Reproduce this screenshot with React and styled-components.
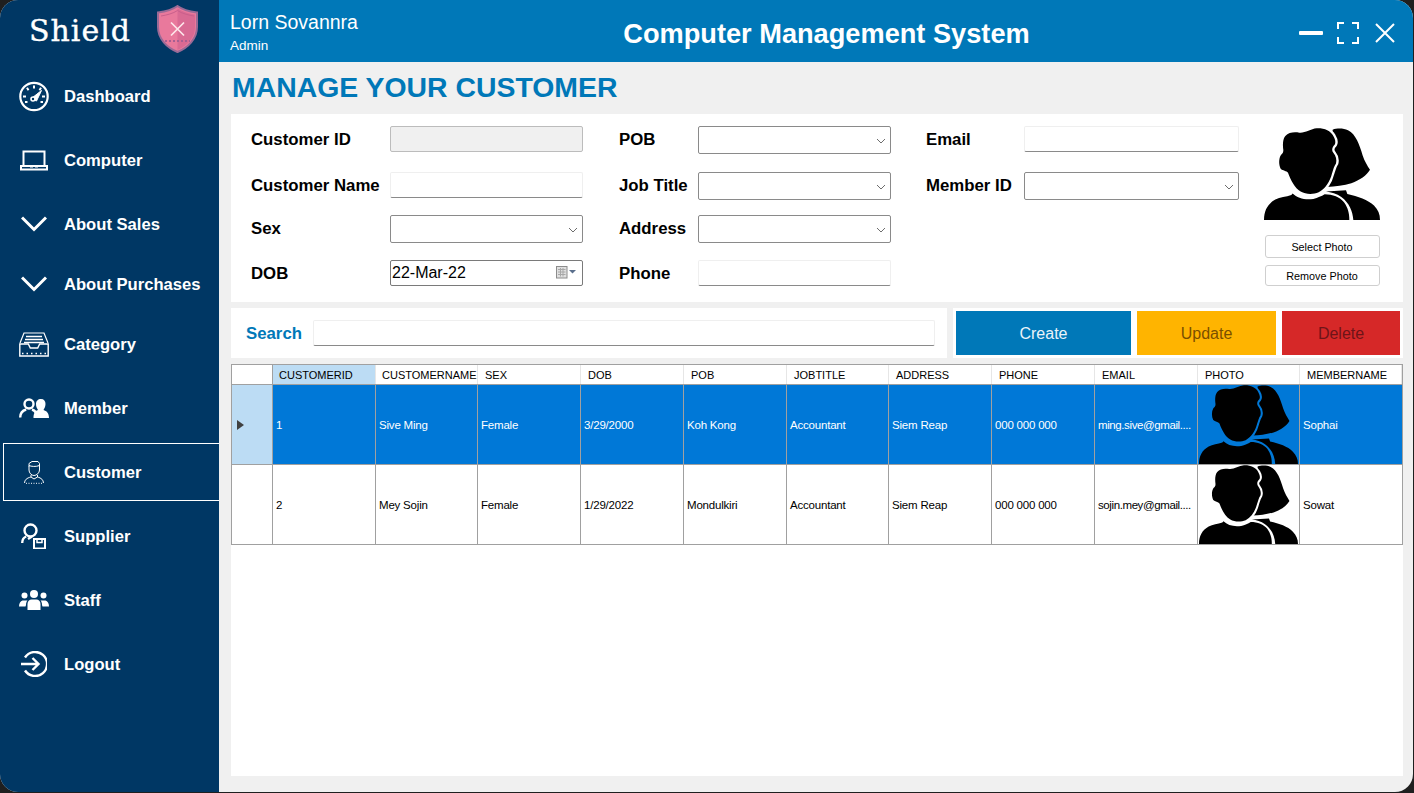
import styled, { createGlobalStyle } from "styled-components";

const GlobalStyle = createGlobalStyle`
  html, body {
    margin: 0;
    padding: 0;
    background: #1f1f1f;
  }
  * {
    box-sizing: border-box;
  }
`;

const COLUMNS = "41px 103px 102px 103px 103px 103px 102px 103px 103px 103px 102px 102px";

const Window = styled.div`
  width: 1413px;
  height: 792px;
  display: flex;
  overflow: hidden;
  border-radius: 18px;
  background: #f0f0f0;
  font-family: "Liberation Sans", Arial, sans-serif;
`;

const Sidebar = styled.aside`
  width: 219px;
  flex-shrink: 0;
  background: #003764;
  color: #fff;
`;

const Brand = styled.div`
  height: 64px;
  display: flex;
  padding: 5px 0 0 29px;
`;

const BrandName = styled.div`
  font-family: "DejaVu Serif", serif;
  font-size: 30px;
  letter-spacing: 1px;
  line-height: 52px;
  width: 128px;
  -webkit-text-stroke: 0.35px #fff;
`;

const Nav = styled.nav`
  display: flex;
  flex-direction: column;
`;

const NavItem = styled.div`
  height: ${(p) => (p.$compact ? "50px" : "58px")};
  margin: 3px 0 3px 3px;
  display: flex;
  align-items: center;
  border: 1px solid ${(p) => (p.$active ? "#fff" : "transparent")};
  border-right: 0;
  font-size: 16.6px;
  font-weight: 700;
`;

const NavLabel = styled.span`
  padding-top: 2px;
`;

const NavIconSlot = styled.div`
  width: 60px;
  flex-shrink: 0;
  display: flex;
  justify-content: center;
  padding-right: 1px;
`;

const Main = styled.main`
  flex: 1;
  min-width: 0;
  display: flex;
  flex-direction: column;
`;

const TopBar = styled.header`
  height: 62px;
  flex-shrink: 0;
  display: flex;
  align-items: center;
  padding-left: 11px;
  padding-right: 18px;
  background: #0078b8;
  color: #fff;
`;

const UserBlock = styled.div`
  width: 124px;
  flex-shrink: 0;
  padding-top: 2px;
`;

const UserName = styled.div`
  font-size: 19.5px;
  line-height: 22px;
  white-space: nowrap;
`;

const UserRole = styled.div`
  font-size: 13.5px;
  line-height: 16px;
  margin-top: 5px;
`;

const AppTitle = styled.h1`
  flex: 1;
  margin: 0;
  padding-top: 6px;
  text-align: center;
  font-size: 27.2px;
  font-weight: 700;
`;

const WindowControls = styled.div`
  display: flex;
  align-items: center;
  gap: 14px;
  padding-top: 4px;
`;

const Content = styled.div`
  flex: 1;
  display: flex;
  flex-direction: column;
  gap: 6px;
  padding: 0 10px 16px 12px;
`;

const PageTitle = styled.h2`
  height: 46px;
  margin: 0;
  padding-left: 1px;
  font-size: 28.4px;
  font-weight: 700;
  line-height: 50px;
  color: #0078b8;
  white-space: nowrap;
`;

const FormPanel = styled.section`
  height: 188px;
  display: flex;
  padding: 12px 23px 0 20px;
  background: #fff;
`;

const FieldColumn = styled.div`
  width: ${(p) => p.$width}px;
  margin-right: ${(p) => p.$gap}px;
  flex-shrink: 0;
  display: grid;
  grid-template-columns: ${(p) => p.$labelWidth}px 1fr;
  grid-template-rows: 46px 43px 45px 28px;
  align-items: start;
`;

const FieldLabel = styled.label`
  font-size: 16.8px;
  font-weight: 700;
  line-height: 28px;
  color: #000;
  white-space: nowrap;
`;

const TextBox = styled.div`
  height: 26px;
  background: ${(p) => (p.$disabled ? "#f0f0f0" : "#fff")};
  border: 1px solid ${(p) => (p.$disabled ? "#bcbcbc" : "#efefef")};
  border-bottom-color: ${(p) => (p.$disabled ? "#bcbcbc" : "#8a8a8a")};
  border-radius: 2px;
`;

const DropDown = styled.div`
  height: 28px;
  display: flex;
  align-items: center;
  justify-content: flex-end;
  padding: 2px 4px 0 0;
  background: #fff;
  border: 1px solid #8a8a8a;
  border-radius: 2px;
`;

const DatePicker = styled.div`
  height: 26px;
  display: flex;
  align-items: center;
  justify-content: space-between;
  padding: 0 5px 1px 1px;
  background: #fff;
  border: 1px solid #7a7a7a;
  border-radius: 2px;
  font-size: 16px;
  color: #000;
`;

const PhotoColumn = styled.div`
  width: 116px;
  margin-top: 2px;
  display: flex;
  flex-direction: column;
  align-items: center;
`;

const PhotoButton = styled.div`
  width: 115px;
  height: ${(p) => p.$height}px;
  margin-top: ${(p) => p.$top}px;
  display: flex;
  align-items: center;
  justify-content: center;
  font-size: 10.8px;
  color: #000;
  background: #fff;
  border: 1px solid #cfcfcf;
  border-radius: 3px;
`;

const ActionRow = styled.div`
  height: 50px;
  display: flex;
  gap: 6px;
`;

const SearchPanel = styled.div`
  width: 716px;
  display: flex;
  align-items: center;
  padding: 0 12px 0 15px;
  background: #fff;
`;

const SearchLabel = styled.label`
  width: 67px;
  padding-top: 1px;
  font-size: 16.8px;
  font-weight: 700;
  color: #0078b8;
`;

const SearchBox = styled(TextBox)`
  flex: 1;
`;

const ActionButtons = styled.div`
  flex: 1;
  display: flex;
  gap: 6px;
  padding: 3px;
  background: #fff;
`;

const ActionButton = styled.div`
  width: ${(p) => p.$width}px;
  height: 44px;
  display: flex;
  align-items: center;
  justify-content: center;
  padding-top: 1px;
  font-size: 16px;
  background: ${(p) => p.$bg};
  color: ${(p) => p.$color};
`;

const GridPanel = styled.section`
  flex: 1;
  background: #fff;
`;

const DataGrid = styled.div`
  width: 1172px;
  border: 1px solid #a0a0a0;
`;

const GridRow = styled.div`
  display: grid;
  grid-template-columns: ${COLUMNS};
  height: ${(p) => (p.$header ? "20px" : p.$last ? "79px" : "80px")};
  background: ${(p) => (p.$selected ? "#0078d7" : "#fff")};
  color: ${(p) => (p.$selected ? "#fff" : "#000")};
  border-bottom: ${(p) => (p.$last ? "0" : "1px solid #a0a0a0")};
`;

const HeaderCell = styled.div`
  display: flex;
  align-items: center;
  padding-left: 7px;
  font-size: 11px;
  color: #000;
  white-space: nowrap;
  overflow: hidden;
  background: ${(p) => (p.$selected ? "#bcdcf4" : "#fff")};
  border-right: 1px solid ${(p) => (p.$corner ? "#a0a0a0" : "#e6e6e6")};
  &:nth-child(-n + 3) {
    padding-left: 6px;
  }
`;

const Cell = styled.div`
  display: flex;
  align-items: center;
  padding-left: 3px;
  font-size: 11.5px;
  letter-spacing: ${(p) => (p.$tight ? "-0.4px" : "-0.2px")};
  white-space: nowrap;
  overflow: hidden;
  border-right: 1px solid #a0a0a0;
  &:last-child {
    border-right: 0;
  }
`;

const PhotoCell = styled(Cell)`
  padding: 0 0 0 1px;
`;

const RowHeader = styled.div`
  display: flex;
  align-items: center;
  padding-left: 5px;
  color: #404040;
  background: ${(p) => (p.$selected ? "#bcdcf4" : "#fff")};
  border-right: 1px solid #a0a0a0;
`;

const Chevron = () => (
  <svg width="10" height="6" viewBox="0 0 10 6" fill="none">
    <path d="M1 1l4 4 4-4" stroke="#6d6d6d" strokeWidth="1" />
  </svg>
);

const CalendarIcon = () => (
  <svg width="21" height="13" viewBox="0 0 21 13">
    <rect x="0.500" y="0.500" width="10.500" height="11.500" fill="#e0e0e0" stroke="#8c8c8c" />
    <path d="M2 3.500h7.500M2 6h7.500M2 8.500h7.500M4.500 2v8.500M7 2v8.500" stroke="#a8a8a8" strokeWidth="1" />
    <path d="M13 4h7l-3.500 3.500z" fill="#5a6f8c" />
  </svg>
);

const PeopleIcon = ({ width, height, gap = "#fff" }) => (
  <svg width={width} height={height} viewBox="0 0 348 275" preserveAspectRatio="none">
    <path d="M206 5C218 1 238 0 252 7C276 19 286 50 296 82C302 100 310 112 318 125C308 142 288 156 262 165C240 172 214 175 188 176Z" />
    <path d="M186 190L246 186L250 197C282 204 312 214 330 232C342 244 348 258 348 275H268C266 248 256 224 232 206C218 196 202 192 186 190Z" />
    <path
      d="M158 1C180 0 200 8 208 24C214 34 216 44 212 50C205 56 202 66 208 74C216 84 219 96 216 106C210 114 208 124 204 136C198 160 184 182 164 192C148 199 126 199 110 190C92 180 80 156 72 134C68 128 56 128 50 122C44 110 44 92 50 82C54 76 58 76 58 66C56 50 56 34 64 24C74 12 92 12 106 14C122 16 140 3 158 1Z"
      stroke={gap}
      strokeWidth="14"
      paintOrder="stroke"
    />
    <path d="M0 275C0 246 12 226 34 214C48 206 66 206 82 200L86 196C100 210 124 216 148 212C162 208 172 204 182 198C206 198 228 206 240 222C252 238 256 256 256 275Z" />
  </svg>
);

const NavSvg = ({ w, h, children }) => (
  <svg width={w} height={h} viewBox={`0 0 ${w} ${h}`} fill="none" stroke="#fff">
    {children}
  </svg>
);

const GaugeIcon = () => (
  <NavSvg w={30} h={31}>
    <circle cx="15" cy="15.500" r="13.700" strokeWidth="2.200" />
    <path d="M15 4.500v3M8 6.800l1.500 2.400M22 6.800l-1.500 2.400M4 15.500h3M26 15.500h-3M6 21h2.500M24 21h-2.500" strokeWidth="2" />
    <path d="M12 17.800L22.500 9.500L17.500 20z" fill="#fff" strokeWidth="1" />
    <circle cx="14" cy="18" r="2" fill="#003764" strokeWidth="1.600" />
  </NavSvg>
);

const LaptopIcon = () => (
  <NavSvg w={28} h={21}>
    <path d="M3.500 16V1.500h21V16" strokeWidth="2" />
    <path d="M1 16h26v3.500H1z" strokeWidth="2" />
    <path d="M10 16.500h3M15 16.500h3" strokeWidth="2" />
  </NavSvg>
);

const DownIcon = () => (
  <NavSvg w={26} h={16}>
    <path d="M1 1.500l12 12 12-12" strokeWidth="3" />
  </NavSvg>
);

const TrayIcon = () => (
  <NavSvg w={30} h={25}>
    <path d="M1 11L5 1h20l4 10" strokeWidth="1.200" />
    <path d="M7 4.500h16M6 7.500h18M5 10.500h20" strokeWidth="1.400" />
    <path d="M.8 12h8.500l2 4h7.400l2-4h8.500v12H.8z" strokeWidth="1.400" />
    <path d="M3 21.500h25" strokeWidth="1.400" strokeDasharray="1.500 3" />
  </NavSvg>
);

const MemberIcon = () => (
  <NavSvg w={30} h={20}>
    <circle cx="10" cy="6" r="4.500" strokeWidth="2.400" />
    <path d="M1.200 19.500c0-4.500 2.500-7 6-8M13 11.500c3 1 5 3.500 5 8" strokeWidth="2.400" />
    <path d="M22 1c3 0 4.500 2 4.500 5s-1.500 5-2 6c3 .8 5.500 3.200 5.500 8H14.500c0-4 1-7 4.500-8-1-1.500-2-3-2-6s2-5 5-5z" fill="#fff" stroke="none" />
  </NavSvg>
);

const CustomerIcon = () => (
  <NavSvg w={20} h={24}>
    <path d="M5 6.500V3.500L8 1.500h6l1.500 2v3M5 5.500c2 1 7 1.500 10.500 0" strokeWidth="1" />
    <path d="M5 6v4c0 3 2.500 5.500 5 5.500s5.500-2.500 5.500-5.500V6" strokeWidth="1" />
    <path d="M7 15v2l3 2 3.500-2v-2" strokeWidth="1" />
    <path d="M.6 23c0-3 2-5 6.400-6M19.400 23c0-3-2-5-6-6" strokeWidth="1" />
    <path d="M2 23.300h17" strokeWidth="1" strokeDasharray="1 1.500" />
  </NavSvg>
);

const SupplierIcon = () => (
  <NavSvg w={25} h={26}>
    <circle cx="9.500" cy="7.500" r="6" strokeWidth="2.400" />
    <path d="M1.200 20c0-3 1.500-5.500 4-6.500M7 16l4-2.500" strokeWidth="2.400" />
    <path d="M13 16h11v9.500H13z" strokeWidth="2" />
    <path d="M16 16v3.500h5V16" strokeWidth="1.500" />
  </NavSvg>
);

const StaffIcon = () => (
  <NavSvg w={30} h={20}>
    <g fill="#fff" stroke="none">
      <circle cx="15" cy="4" r="4" />
      <circle cx="5.500" cy="5.500" r="3" />
      <circle cx="24.500" cy="5.500" r="3" />
      <path d="M8.500 20v-6c0-3 2-4.500 4-4.500h5c2 0 4 1.500 4 4.500v6z" />
      <path d="M0 16.500c0-3 1.500-5.500 3.500-6h5c-1 1-1.500 2.500-1.500 4.500L6.500 16.500zM30 16.500c0-3-1.500-5.500-3.500-6h-5c1 1 1.500 2.500 1.500 4.500l.500 1.500z" />
    </g>
  </NavSvg>
);

const LogoutIcon = () => (
  <NavSvg w={26} h={26}>
    <path d="M4 6.500A12 12 0 1 1 4 19.500" strokeWidth="2.400" />
    <path d="M0 13h16M11.500 7l6 6-6 6" strokeWidth="2.400" />
  </NavSvg>
);

const ShieldLogo = () => (
  <svg width="41" height="48" viewBox="0 0 41 48">
    <path d="M20.500 1C26 5 32 6.500 40 7.500V22C40 34 31 42.500 20.500 47C10 42.500 1 34 1 22V7.500C9 6.500 15 5 20.500 1z" fill="#e9799c" stroke="#9a6a96" strokeWidth="2" />
    <path d="M20.500 3.500C26 7 32 8.500 38 9.500V22C38 33 30 41 20.500 45z" fill="#d96a93" />
    <path d="M4 11C10 10 16 8.500 20.500 5.500C25 8.500 31 10 37 11" fill="none" stroke="#c95f8c" strokeWidth="1" />
    <path d="M8 36h25" stroke="#a65f92" strokeWidth="2" strokeDasharray="2 2" />
    <path d="M14 17.500l13 13M27 17.500l-13 13" stroke="#fde6ea" strokeWidth="1.700" />
  </svg>
);

const MinimizeIcon = () => (
  <svg width="24" height="4" viewBox="0 0 24 4">
    <rect width="24" height="4" rx="1" fill="#fff" />
  </svg>
);

const MaximizeIcon = () => (
  <svg width="22" height="22" viewBox="0 0 22 22" fill="none" stroke="#fff" strokeWidth="2">
    <path d="M7 1H1v6M15 1h6v6M7 21H1v-6M15 21h6v-6" />
  </svg>
);

const CloseIcon = () => (
  <svg width="20" height="20" viewBox="0 0 20 20" fill="none" stroke="#fff" strokeWidth="2" style={{ marginLeft: 2 }}>
    <path d="M1 1l18 18M19 1L1 19" />
  </svg>
);

const RowArrow = () => (
  <svg width="7" height="10" viewBox="0 0 7 10">
    <path d="M0 0l7 5-7 5z" fill="currentColor" />
  </svg>
);

const navItems = [
  { label: "Dashboard", icon: <GaugeIcon /> },
  { label: "Computer", icon: <LaptopIcon /> },
  { label: "About Sales", icon: <DownIcon /> },
  { label: "About Purchases", icon: <DownIcon />, compact: true },
  { label: "Category", icon: <TrayIcon /> },
  { label: "Member", icon: <MemberIcon /> },
  { label: "Customer", icon: <CustomerIcon />, active: true },
  { label: "Supplier", icon: <SupplierIcon /> },
  { label: "Staff", icon: <StaffIcon /> },
  { label: "Logout", icon: <LogoutIcon /> },
];

const headers = [
  "CUSTOMERID",
  "CUSTOMERNAME",
  "SEX",
  "DOB",
  "POB",
  "JOBTITLE",
  "ADDRESS",
  "PHONE",
  "EMAIL",
  "PHOTO",
  "MEMBERNAME",
];

const customers = [
  {
    id: "1",
    name: "Sive Ming",
    sex: "Female",
    dob: "3/29/2000",
    pob: "Koh Kong",
    job: "Accountant",
    address: "Siem Reap",
    phone: "000 000 000",
    email: "ming.sive@gmail....",
    member: "Sophai",
    selected: true,
  },
  {
    id: "2",
    name: "Mey Sojin",
    sex: "Female",
    dob: "1/29/2022",
    pob: "Mondulkiri",
    job: "Accountant",
    address: "Siem Reap",
    phone: "000 000 000",
    email: "sojin.mey@gmail....",
    member: "Sowat",
  },
];

export default function App() {
  return (
    <Window>
      <GlobalStyle />
      <Sidebar>
        <Brand>
          <BrandName>Shield</BrandName>
          <ShieldLogo />
        </Brand>
        <Nav>
          {navItems.map((item) => (
            <NavItem key={item.label} $active={item.active} $compact={item.compact}>
              <NavIconSlot>{item.icon}</NavIconSlot>
              <NavLabel>{item.label}</NavLabel>
            </NavItem>
          ))}
        </Nav>
      </Sidebar>
      <Main>
        <TopBar>
          <UserBlock>
            <UserName>Lorn Sovannra</UserName>
            <UserRole>Admin</UserRole>
          </UserBlock>
          <AppTitle>Computer Management System</AppTitle>
          <WindowControls>
            <MinimizeIcon />
            <MaximizeIcon />
            <CloseIcon />
          </WindowControls>
        </TopBar>
        <Content>
          <PageTitle>MANAGE YOUR CUSTOMER</PageTitle>
          <FormPanel>
            <FieldColumn $width={332} $gap={36} $labelWidth={139}>
              <FieldLabel>Customer ID</FieldLabel>
              <TextBox $disabled />
              <FieldLabel>Customer Name</FieldLabel>
              <TextBox />
              <FieldLabel>Sex</FieldLabel>
              <DropDown>
                <Chevron />
              </DropDown>
              <FieldLabel>DOB</FieldLabel>
              <DatePicker>
                22-Mar-22
                <CalendarIcon />
              </DatePicker>
            </FieldColumn>
            <FieldColumn $width={272} $gap={35} $labelWidth={79}>
              <FieldLabel>POB</FieldLabel>
              <DropDown>
                <Chevron />
              </DropDown>
              <FieldLabel>Job Title</FieldLabel>
              <DropDown>
                <Chevron />
              </DropDown>
              <FieldLabel>Address</FieldLabel>
              <DropDown>
                <Chevron />
              </DropDown>
              <FieldLabel>Phone</FieldLabel>
              <TextBox />
            </FieldColumn>
            <FieldColumn $width={313} $gap={25} $labelWidth={98}>
              <FieldLabel>Email</FieldLabel>
              <TextBox />
              <FieldLabel>Member ID</FieldLabel>
              <DropDown>
                <Chevron />
              </DropDown>
            </FieldColumn>
            <PhotoColumn>
              <PeopleIcon width={116} height={92} />
              <PhotoButton $height={23} $top={15}>Select Photo</PhotoButton>
              <PhotoButton $height={21} $top={7}>Remove Photo</PhotoButton>
            </PhotoColumn>
          </FormPanel>
          <ActionRow>
            <SearchPanel>
              <SearchLabel>Search</SearchLabel>
              <SearchBox />
            </SearchPanel>
            <ActionButtons>
              <ActionButton $width={175} $bg="#0078b8" $color="#eaf4fa">Create</ActionButton>
              <ActionButton $width={139} $bg="#ffb400" $color="#7a4f00">Update</ActionButton>
              <ActionButton $width={118} $bg="#d62828" $color="#6e1418">Delete</ActionButton>
            </ActionButtons>
          </ActionRow>
          <GridPanel>
            <DataGrid>
              <GridRow $header>
                <HeaderCell $corner />
                {headers.map((title, i) => (
                  <HeaderCell key={title} $selected={i === 0}>
                    {title}
                  </HeaderCell>
                ))}
              </GridRow>
              {customers.map((row, i) => (
                <GridRow key={row.id} $selected={row.selected} $last={i === customers.length - 1}>
                  <RowHeader $selected={row.selected}>{row.selected && <RowArrow />}</RowHeader>
                  <Cell>{row.id}</Cell>
                  <Cell>{row.name}</Cell>
                  <Cell>{row.sex}</Cell>
                  <Cell>{row.dob}</Cell>
                  <Cell>{row.pob}</Cell>
                  <Cell>{row.job}</Cell>
                  <Cell>{row.address}</Cell>
                  <Cell>{row.phone}</Cell>
                  <Cell $tight>{row.email}</Cell>
                  <PhotoCell>
                    <PeopleIcon width={99} height={79} gap={row.selected ? "#0078d7" : "#fff"} />
                  </PhotoCell>
                  <Cell>{row.member}</Cell>
                </GridRow>
              ))}
            </DataGrid>
          </GridPanel>
        </Content>
      </Main>
    </Window>
  );
}
